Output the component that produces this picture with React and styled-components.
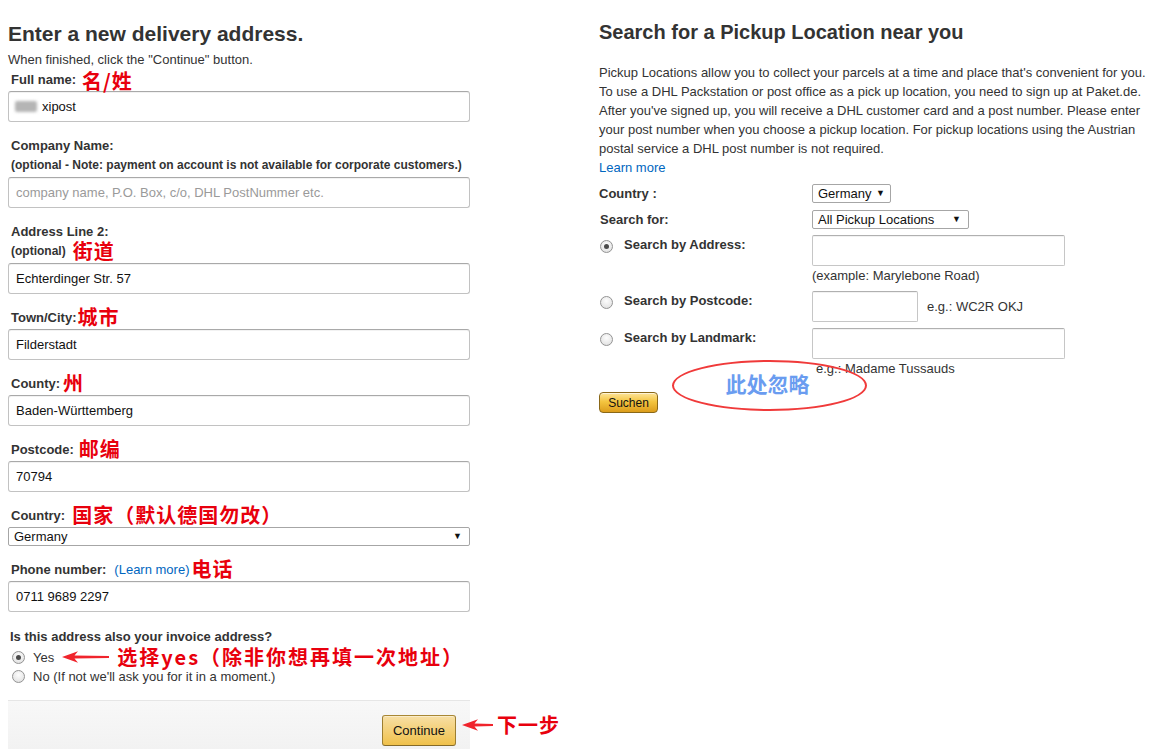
import React from 'react';
import styled, { createGlobalStyle } from 'styled-components';

const GlobalStyle = createGlobalStyle`
  html, body { margin: 0; padding: 0; background: #fff; }
  body {
    font-family: "Liberation Sans", Arial, sans-serif;
    font-size: 13px;
    color: #333;
  }
  * { box-sizing: border-box; }
`;

const Page = styled.div`
  display: flex;
  align-items: flex-start;
  padding: 18px 0 0 8px;
  width: 1165px;
  height: 749px;
  overflow: hidden;
`;

const LeftCol = styled.div`
  width: 462px;
  flex: none;
  padding-top: 2px;
`;

const RightCol = styled.div`
  margin-left: 129px;
  width: 566px;
  flex: none;
`;

const Title = styled.h1`
  margin: 0 0 3px;
  font-size: 21px;
  line-height: 28px;
  font-weight: 700;
  color: #333;
  white-space: nowrap;
`;

const Intro = styled.div`
  line-height: 18px;
  font-size: 13px;
  color: #333;
`;

const Field = styled.div`
  margin-bottom: 13px;
`;

const LabelRow = styled.div`
  display: flex;
  align-items: center;
  height: 20px;
  padding-left: 3px;
  font-size: ${p => (p.$small ? 12 : 13)}px;
  font-weight: 700;
  color: #333;
  white-space: nowrap;
  margin-bottom: ${p => (p.$last ? 2 : 0)}px;
`;

const Note = styled.span`
  font-family: "Noto Sans CJK SC", "Liberation Sans", sans-serif;
  font-weight: 700;
  font-size: 20px;
  line-height: 18px;
  letter-spacing: ${p => p.$ls ?? 0}px;
  color: #e8000d;
  margin-left: ${p => p.$gap ?? 6}px;
  margin-top: ${p => p.$mt ?? 0}px;
  white-space: nowrap;
`;

const LinkText = styled.span`
  color: #0066c0;
  font-weight: 400;
  font-size: 13px;
  margin-left: ${p => p.$gap ?? 0}px;
`;

const inputLook = `
  height: 31px;
  border: 1px solid #c2c2c2;
  border-top-color: #a9a9a9;
  border-radius: 3px;
  background: #fff;
  box-shadow: inset 0 1px 0 rgba(0, 0, 0, 0.05);
  font-family: "Liberation Sans", Arial, sans-serif;
  font-size: 13px;
  color: #111;
`;

const TextInput = styled.input`
  ${inputLook}
  display: block;
  width: 100%;
  padding: 0 7px;
  outline: none;
  &::placeholder { color: #9a9a9a; }
`;

const FakeInput = styled.div`
  ${inputLook}
  display: flex;
  align-items: center;
  gap: 5px;
  width: 100%;
  padding: 0 6px;
`;

const Blurred = styled.span`
  display: inline-block;
  width: 22px;
  height: 11px;
  background: #b5b5b5;
  filter: blur(1.5px);
  border-radius: 2px;
`;

const SelectBox = styled.div`
  display: flex;
  align-items: center;
  justify-content: space-between;
  width: ${p => p.$w};
  height: 19px;
  border: 1px solid #a6a6a6;
  border-radius: 2px;
  background: #fff;
  padding: 0 ${p => p.$pr ?? 7}px 0 5px;
  font-size: 13px;
  color: #111;
  white-space: nowrap;
`;

const Caret = styled.span`
  font-size: 9px;
  color: #111;
  line-height: 1;
`;

const Question = styled.div`
  height: 20px;
  line-height: 20px;
  margin-top: 15px;
  padding-left: 2px;
  font-weight: 700;
  color: #333;
`;

const OptionRow = styled.div`
  display: flex;
  align-items: center;
  height: ${p => p.$h ?? 19}px;
  padding-left: 4px;
  gap: 8px;
  color: #333;
  white-space: nowrap;
`;

const Radio = styled.span`
  position: relative;
  flex: none;
  width: 13px;
  height: 13px;
  border-radius: 50%;
  border: 1px solid #939393;
  background: radial-gradient(circle at 50% 35%, #fdfdfd 0%, #e6e6e6 70%, #d4d4d4 100%);
  margin-top: ${p => p.$mt ?? 0}px;
  &::after {
    content: "";
    display: ${p => (p.$checked ? 'block' : 'none')};
    position: absolute;
    left: 3px;
    top: 3px;
    width: 5px;
    height: 5px;
    border-radius: 50%;
    background: #4a4a4a;
  }
`;

const ArrowIcon = styled.svg`
  flex: none;
  display: block;
  margin-left: ${p => p.$ml ?? 0}px;
`;

const BottomRow = styled.div`
  display: flex;
  align-items: center;
  margin-top: 14px;
  width: 600px;
`;

const ActionBar = styled.div`
  flex: none;
  width: 462px;
  height: 49px;
  display: flex;
  justify-content: flex-end;
  align-items: flex-start;
  padding: 14px 14px 0 0;
  border-top: 1px solid #e6e6e6;
  background: linear-gradient(#f8f8f8, #f2f2f2);
`;

const ContinueButton = styled.button`
  width: 74px;
  height: 31px;
  border: 1px solid;
  border-color: #a88734 #9c7e31 #846a29;
  border-radius: 3px;
  background: linear-gradient(#f7dfa5, #f0c14b);
  box-shadow: inset 0 1px 0 rgba(255, 255, 255, 0.4);
  font-family: "Liberation Sans", Arial, sans-serif;
  font-size: 13px;
  color: #111;
  padding: 0;
`;

const RightTitle = styled.h2`
  margin: 0;
  font-size: 20px;
  line-height: 28px;
  font-weight: 700;
  color: #333;
  white-space: nowrap;
`;

const Para = styled.p`
  margin: 17px 0 0;
  font-size: 13px;
  line-height: 19px;
  color: #333;
  white-space: nowrap;
`;

const Form = styled.div`
  display: flex;
  flex-direction: column;
  margin-top: 7px;
`;

const FormRow = styled.div`
  display: grid;
  grid-template-columns: 213px auto;
  align-items: start;
  margin-top: ${p => p.$mt ?? 0}px;
`;

const RowLabel = styled.div`
  display: flex;
  align-items: flex-start;
  gap: 11px;
  line-height: 19px;
  font-weight: 700;
  color: #333;
  padding-left: ${p => p.$pl ?? 0}px;
  white-space: nowrap;
`;

const RowField = styled.div`
  display: flex;
  flex-direction: ${p => (p.$inline ? 'row' : 'column')};
  align-items: ${p => (p.$inline ? 'center' : 'flex-start')};
  gap: ${p => (p.$inline ? 9 : 0)}px;
`;

const RightInput = styled.input`
  ${inputLook}
  border-color: #c6c6c6;
  border-top-color: #b0b0b0;
  border-radius: 2px;
  width: ${p => p.$w}px;
  padding: 0 6px;
  outline: none;
`;

const Hint = styled.span`
  line-height: 19px;
  color: #333;
  padding-left: ${p => p.$pl ?? 0}px;
  white-space: nowrap;
`;

const SubmitRow = styled.div`
  position: relative;
  margin-top: 14px;
  height: 21px;
`;

const SuchenButton = styled.button`
  width: 59px;
  height: 21px;
  padding: 0;
  border: 1px solid #8a6818;
  border-radius: 4px;
  background: linear-gradient(#fde49a 0%, #f4c540 45%, #dc9d1c 100%);
  box-shadow: inset 0 1px 0 rgba(255, 255, 255, 0.6);
  font-family: "Liberation Sans", Arial, sans-serif;
  font-size: 12px;
  color: #111;
`;

const Ellipse = styled.div`
  position: absolute;
  left: 73px;
  top: -32px;
  width: 195px;
  height: 51px;
  border: 2.5px solid #f03a3a;
  border-radius: 50%;
  display: flex;
  align-items: center;
  justify-content: center;
  padding: 0 4px 4px 0;
`;

const IgnoreText = styled.span`
  font-family: "Noto Sans CJK SC", sans-serif;
  font-weight: 700;
  font-size: 21px;
  line-height: 1;
  color: #6a9cf0;
`;

const Arrow = ({ w, ml }) => (
  <ArrowIcon $ml={ml} width={w} height="12" viewBox={`0 0 ${w} 12`} aria-hidden="true">
    <polygon
      points={`0,6 16,0.3 12.5,4.4 ${w},5.1 ${w},6.9 12.5,7.6 16,11.7`}
      fill="#f0242c"
    />
  </ArrowIcon>
);

export default function App() {
  return (
    <>
      <GlobalStyle />
      <Page>
        <LeftCol>
          <Title>Enter a new delivery address.</Title>
          <Intro>When finished, click the "Continue" button.</Intro>

          <Field>
            <LabelRow $last>
              Full name:<Note $gap={6} $ls={1} $mt={3}>名/姓</Note>
            </LabelRow>
            <FakeInput>
              <Blurred />
              xipost
            </FakeInput>
          </Field>

          <Field>
            <LabelRow>Company Name:</LabelRow>
            <LabelRow $small $last>
              (optional - Note: payment on account is not available for corporate customers.)
            </LabelRow>
            <TextInput placeholder="company name, P.O. Box, c/o, DHL PostNummer etc." readOnly />
          </Field>

          <Field>
            <LabelRow>Address Line 2:</LabelRow>
            <LabelRow $small $last>
              (optional)<Note $gap={7} $ls={1}>街道</Note>
            </LabelRow>
            <TextInput defaultValue="Echterdinger Str. 57" readOnly />
          </Field>

          <Field>
            <LabelRow $last>
              Town/City:<Note $gap={1} $ls={1}>城市</Note>
            </LabelRow>
            <TextInput defaultValue="Filderstadt" readOnly />
          </Field>

          <Field>
            <LabelRow $last>
              County:<Note $gap={3}>州</Note>
            </LabelRow>
            <TextInput defaultValue="Baden-Württemberg" readOnly />
          </Field>

          <Field>
            <LabelRow $last>
              Postcode:<Note $gap={5} $ls={1}>邮编</Note>
            </LabelRow>
            <TextInput defaultValue="70794" readOnly />
          </Field>

          <Field>
            <LabelRow $last>
              Country:<Note $gap={7} $ls={1}>国家（默认德国勿改）</Note>
            </LabelRow>
            <SelectBox $w="100%">
              Germany
              <Caret>▼</Caret>
            </SelectBox>
          </Field>

          <Field>
            <LabelRow $last>
              Phone number:<LinkText $gap={8}>(Learn more)</LinkText>
              <Note $gap={2} $ls={1}>电话</Note>
            </LabelRow>
            <TextInput defaultValue="0711 9689 2297" readOnly />
          </Field>

          <Question>Is this address also your invoice address?</Question>
          <OptionRow $h={20}>
            <Radio $checked />
            Yes
            <Arrow w={47} ml={0} />
            <Note $gap={0} $ls={2}>选择yes（除非你想再填一次地址）</Note>
          </OptionRow>
          <OptionRow>
            <Radio />
            No (If not we'll ask you for it in a moment.)
          </OptionRow>

          <BottomRow>
            <ActionBar>
              <ContinueButton>Continue</ContinueButton>
            </ActionBar>
            <Arrow w={31} ml={-8} />
            <Note $gap={4} $ls={1}>下一步</Note>
          </BottomRow>
        </LeftCol>

        <RightCol>
          <RightTitle>Search for a Pickup Location near you</RightTitle>
          <Para>
            Pickup Locations allow you to collect your parcels at a time and place that's convenient for you.
            <br />
            To use a DHL Packstation or post office as a pick up location, you need to sign up at Paket.de.
            <br />
            After you've signed up, you will receive a DHL customer card and a post number. Please enter
            <br />
            your post number when you choose a pickup location. For pickup locations using the Austrian
            <br />
            postal service a DHL post number is not required.
            <br />
            <LinkText>Learn more</LinkText>
          </Para>

          <Form>
            <FormRow>
              <RowLabel>Country :</RowLabel>
              <RowField>
                <SelectBox $w="79px" $pr={5}>
                  Germany
                  <Caret>▼</Caret>
                </SelectBox>
              </RowField>
            </FormRow>

            <FormRow $mt={7}>
              <RowLabel $pl={1}>Search for:</RowLabel>
              <RowField>
                <SelectBox $w="157px" $pr={7}>
                  All Pickup Locations
                  <Caret>▼</Caret>
                </SelectBox>
              </RowField>
            </FormRow>

            <FormRow $mt={6}>
              <RowLabel $pl={1}>
                <Radio $checked $mt={5} />
                Search by Address:
              </RowLabel>
              <RowField>
                <RightInput $w={253} readOnly />
                <Hint>(example: Marylebone Road)</Hint>
              </RowField>
            </FormRow>

            <FormRow $mt={6}>
              <RowLabel $pl={1}>
                <Radio $mt={5} />
                Search by Postcode:
              </RowLabel>
              <RowField $inline>
                <RightInput $w={106} readOnly />
                <Hint>e.g.: WC2R OKJ</Hint>
              </RowField>
            </FormRow>

            <FormRow $mt={6}>
              <RowLabel $pl={1}>
                <Radio $mt={5} />
                Search by Landmark:
              </RowLabel>
              <RowField>
                <RightInput $w={253} readOnly />
                <Hint $pl={4}>e.g.: Madame Tussauds</Hint>
              </RowField>
            </FormRow>

            <SubmitRow>
              <SuchenButton>Suchen</SuchenButton>
              <Ellipse>
                <IgnoreText>此处忽略</IgnoreText>
              </Ellipse>
            </SubmitRow>
          </Form>
        </RightCol>
      </Page>
    </>
  );
}
